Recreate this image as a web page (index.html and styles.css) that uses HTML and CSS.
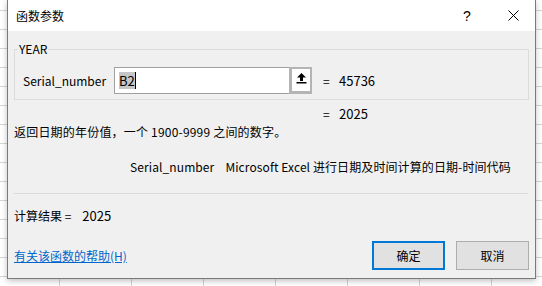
FILE: index.html
```html
<!DOCTYPE html>
<html lang="zh-CN">
<head>
    <meta charset="UTF-8">
    <title>函数参数</title>
    <link rel="stylesheet" href="styles.css">
</head>
<body>
    <div class="dialog">
        <div class="titlebar">
            <span class="title">函数参数</span>
            <span class="title-btn help">?</span>
            <span class="title-btn close">
                <svg width="11" height="11" viewBox="0 0 11 11"><path d="M0.5 0.5 L10.5 10.5 M10.5 0.5 L0.5 10.5" stroke="#000" stroke-width="1" fill="none"/></svg>
            </span>
        </div>

        <div class="content">
            <fieldset class="args">
                <legend>YEAR</legend>
                <div class="arg-row">
                    <span class="arg-name">Serial_number</span>
                    <div class="ref-box">
                        <span class="ref-text"><span class="sel">B2</span><span class="caret"></span></span>
                        <span class="ref-btn">
                            <svg width="11" height="12" viewBox="0 0 11 12"><path d="M5.5 1 L10 5.5 L7 5.5 L7 9 L4 9 L4 5.5 L1 5.5 Z" fill="#000"/><rect x="0.5" y="10" width="10" height="1.5" fill="#000"/></svg>
                        </span>
                    </div>
                    <span class="eq">=</span>
                    <span class="val">45736</span>
                </div>
            </fieldset>

            <div class="result-row">
                <span class="eq">=</span>
                <span class="val">2025</span>
            </div>

            <p class="desc">返回日期的年份值，一个 1900-9999 之间的数字。</p>
            <p class="arg-desc"><span class="arg-desc-name">Serial_number</span>Microsoft Excel 进行日期及时间计算的日期-时间代码</p>

            <div class="sep"></div>

            <p class="calc">计算结果 =<span class="calc-val">2025</span></p>

            <div class="footer">
                <a href="#" class="help-link">有关该函数的帮助(H)</a>
                <div class="buttons">
                    <button class="btn default">确定</button>
                    <button class="btn">取消</button>
                </div>
            </div>
        </div>
    </div>
</body>
</html>
```

FILE: styles.css
```css
body {
    margin: 0;
    height: 286px;
    overflow: hidden;
    font-family: "Noto Sans CJK SC", "Noto Sans", sans-serif;
    font-size: 12px;
    color: #000;
    background-color: #fff;
    background-image:
        repeating-linear-gradient(to bottom, transparent 0, transparent 10px, #d5d5d5 10px, #d5d5d5 11px, transparent 11px, transparent 19px),
        repeating-linear-gradient(to right, transparent 0, transparent 59px, #d5d5d5 59px, #d5d5d5 60px, transparent 60px, transparent 72px);
}

.dialog {
    box-sizing: border-box;
    margin-left: 7px;
    width: 529px;
    height: 279px;
    border: 1px solid #7a7a7a;
    border-top: none;
    background: #f0f0f0;
    box-shadow: 0 2px 6px rgba(0, 0, 0, 0.25);
    display: flex;
    flex-direction: column;
}

.titlebar {
    height: 31px;
    background: #fff;
    display: flex;
    align-items: center;
    padding-left: 8px;
}

.title {
    flex: 1;
    font-size: 12px;
}

.title-btn {
    display: flex;
    align-items: center;
    justify-content: center;
    width: 44px;
    height: 31px;
}

.help {
    font-family: "Liberation Sans", sans-serif;
    font-size: 14px;
    margin-right: 2px;
}

.content {
    padding: 10px 6px 0 6px;
    flex: 1;
    display: flex;
    flex-direction: column;
}

.args {
    margin: 0;
    border: 1px solid #dcdcdc;
    padding: 10px 8px 5px 8px;
}

.args legend {
    margin-left: -5px;
    padding: 0 1px;
    line-height: 16px;
}

.arg-row {
    display: flex;
    align-items: center;
}

.arg-name {
    width: 91px;
}

.ref-box {
    box-sizing: border-box;
    width: 198px;
    height: 27px;
    display: flex;
    background: #fff;
    border: 1px solid #a0a0a0;
}

.ref-text {
    flex: 1;
    display: flex;
    align-items: center;
    padding-left: 4px;
    font-size: 13px;
}

.sel {
    background: #c6c6c6;
    line-height: 17px;
}

.caret {
    width: 1px;
    height: 17px;
    background: #000;
}

.ref-btn {
    box-sizing: border-box;
    width: 23px;
    margin: -1px -1px -1px 0;
    border: 2px solid #b4b4b4;
    border-left-width: 3px;
    border-bottom-width: 3px;
    background: #fff;
    display: flex;
    align-items: flex-start;
    justify-content: center;
    padding-top: 3px;
}

.eq {
    margin-left: 11px;
    width: 16px;
}

.val {
    font-size: 13px;
}

.result-row {
    display: flex;
    padding-left: 298px;
    margin-top: 5px;
    line-height: 17px;
}

.desc {
    margin: 1px 0 0 0;
    line-height: 17px;
    letter-spacing: 0.2px;
}

.arg-desc {
    margin: 18px 0 0 116px;
    line-height: 17px;
    letter-spacing: 0.1px;
}

.arg-desc-name {
    margin-right: 11px;
}

.sep {
    height: 1px;
    background: #d9d9d9;
    margin: 18px 0 0 0;
    width: 514px;
}

.calc {
    margin: 13px 0 0 0;
    line-height: 17px;
}

.calc-val {
    margin-left: 11px;
    font-size: 13px;
}

.footer {
    display: flex;
    align-items: center;
    margin-top: 17px;
}

.help-link {
    flex: 1;
    color: #0066cc;
    text-decoration: underline;
}

.buttons {
    display: flex;
    gap: 11px;
}

.btn {
    box-sizing: border-box;
    width: 73px;
    height: 29px;
    font-family: "Noto Sans CJK SC", sans-serif;
    font-size: 12px;
    background: #e1e1e1;
    border: 1px solid #adadad;
    padding: 0;
}

.btn.default {
    border: 2px solid #0078d7;
}
```
